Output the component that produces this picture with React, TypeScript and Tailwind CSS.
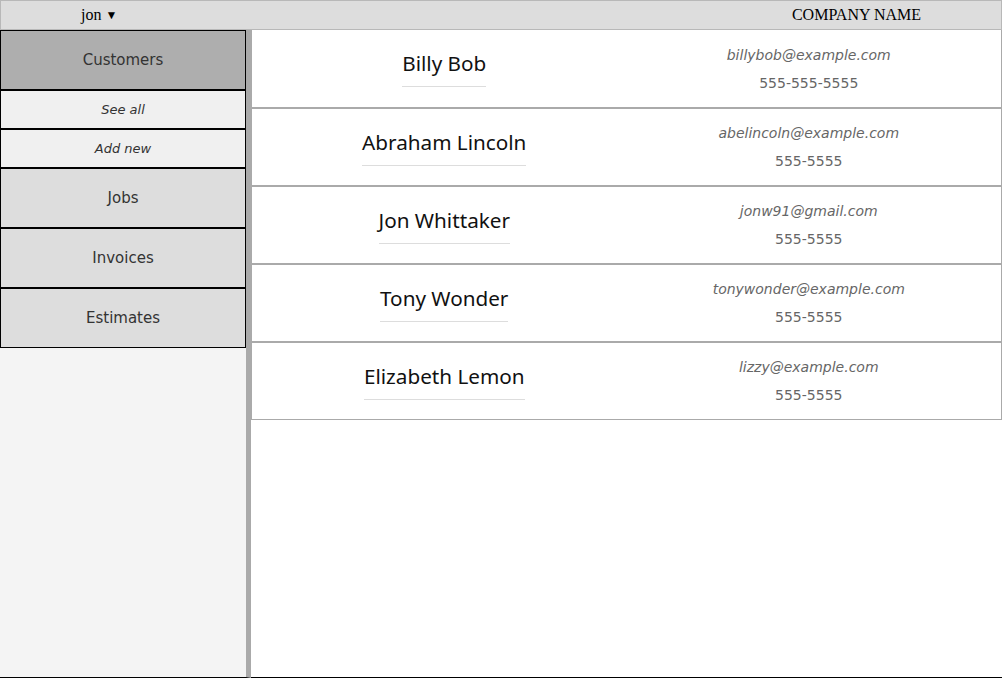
import React from "react";

const customers = [
  { name: "Billy Bob", email: "billybob@example.com", phone: "555-555-5555" },
  { name: "Abraham Lincoln", email: "abelincoln@example.com", phone: "555-5555" },
  { name: "Jon Whittaker", email: "jonw91@gmail.com", phone: "555-5555" },
  { name: "Tony Wonder", email: "tonywonder@example.com", phone: "555-5555" },
  { name: "Elizabeth Lemon", email: "lizzy@example.com", phone: "555-5555" },
];

const dv = { fontFamily: '"DejaVu Sans", sans-serif' };

export default function App() {
  return (
    <div className="w-[1002px] h-[678px] flex flex-col overflow-hidden bg-white">
      <header
        className="h-[30px] shrink-0 flex items-center justify-between px-[80px] bg-[#dddddd] border border-[#b8b8b8] text-[16px] text-black"
        style={{ fontFamily: '"Liberation Serif", serif' }}
      >
        <span>
          jon <span className="text-[12px] align-[1px]">▼</span>
        </span>
        <span>COMPANY NAME</span>
      </header>
      <div className="flex flex-1 min-h-0">
        <aside className="w-[251px] shrink-0 bg-[#f4f4f4] border-r-[5px] border-r-[#aaaaaa] border-b border-b-black flex flex-col text-[#333]" style={dv}>
          <div className="h-[60px] flex items-center justify-center bg-[#aeaeae] border border-black text-[15px]">Customers</div>
          <div className="h-[39px] flex items-center justify-center bg-[#f0f0f0] border border-black text-[13px] italic">See all</div>
          <div className="h-[39px] flex items-center justify-center bg-[#f0f0f0] border border-black text-[13px] italic">Add new</div>
          <div className="h-[60px] flex items-center justify-center bg-[#dddddd] border border-black text-[15px]">Jobs</div>
          <div className="h-[60px] flex items-center justify-center bg-[#dddddd] border border-black text-[15px]">Invoices</div>
          <div className="h-[60px] flex items-center justify-center bg-[#dddddd] border border-black text-[15px]">Estimates</div>
        </aside>
        <main className="flex-1 bg-white border-b border-b-black flex flex-col">
          {customers.map((c, i) => (
            <div
              key={c.name}
              className={
                i === 0
                  ? "h-[78px] grid grid-cols-2 items-center px-[10px] border-x border-b border-[#aaaaaa]"
                  : "h-[78px] grid grid-cols-2 items-center px-[10px] border border-[#aaaaaa]"
              }
            >
              <div className="flex justify-center">
                <span
                  className="inline-block text-[20.7px] font-normal leading-[27px] text-[#111] pb-[9px] border-b border-[#dddddd]"
                  style={{ fontFamily: '"Noto Sans", "Open Sans", sans-serif' }}
                >
                  {c.name}
                </span>
              </div>
              <div className="flex flex-col items-center text-[14px] leading-[28px] text-[#666]" style={dv}>
                <span className="italic">{c.email}</span>
                <span>{c.phone}</span>
              </div>
            </div>
          ))}
        </main>
      </div>
    </div>
  );
}
